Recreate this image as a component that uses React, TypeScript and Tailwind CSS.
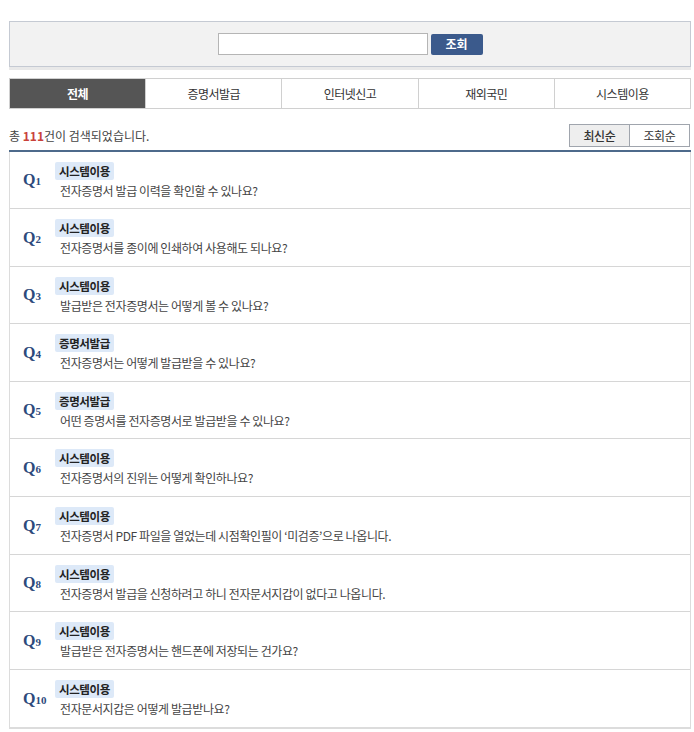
import React from 'react';

const TABS = ['전체', '증명서발급', '인터넷신고', '재외국민', '시스템이용'];

const FAQS = [
  { cat: '시스템이용', q: '전자증명서 발급 이력을 확인할 수 있나요?', h: 'h-[56px]' },
  { cat: '시스템이용', q: '전자증명서를 종이에 인쇄하여 사용해도 되나요?', h: 'h-[58px]' },
  { cat: '시스템이용', q: '발급받은 전자증명서는 어떻게 볼 수 있나요?', h: 'h-[57px]' },
  { cat: '증명서발급', q: '전자증명서는 어떻게 발급받을 수 있나요?', h: 'h-[58px]' },
  { cat: '증명서발급', q: '어떤 증명서를 전자증명서로 발급받을 수 있나요?', h: 'h-[57px]' },
  { cat: '시스템이용', q: '전자증명서의 진위는 어떻게 확인하나요?', h: 'h-[58px]' },
  { cat: '시스템이용', q: '전자증명서 PDF 파일을 열었는데 시점확인필이 ‘미검증’으로 나옵니다.', h: 'h-[58px]' },
  { cat: '시스템이용', q: '전자증명서 발급을 신청하려고 하니 전자문서지갑이 없다고 나옵니다.', h: 'h-[57px]' },
  { cat: '시스템이용', q: '발급받은 전자증명서는 핸드폰에 저장되는 건가요?', h: 'h-[58px]' },
  { cat: '시스템이용', q: '전자문서지갑은 어떻게 발급받나요?', h: 'h-[58px]' },
];

const font = { fontFamily: '"Noto Sans CJK KR", "Noto Sans", sans-serif' };

export default function App() {
  return (
    <div className="min-h-[732px] bg-white pt-[21px] pl-[9px] pr-[3px] text-[12px] text-[#333]" style={font}>
      {/* search */}
      <div className="border border-[#c5cad3] bg-[#f2f2f2] shadow-[0_3px_0_#e9e9e9]">
        <div className="flex h-[44px] items-center justify-center gap-[3px]">
          <input className="h-[22px] w-[210px] border border-[#b5b5b5] bg-white" />
          <button className="h-[21px] w-[52px] rounded-[2px] bg-[#3b5a8c] text-[12px] font-bold text-white">조회</button>
        </div>
      </div>

      {/* tabs */}
      <div className="mt-[11px] flex h-[31px] border border-[#d0d0d0] tracking-[-0.5px]">
        {TABS.map((t, i) => (
          <div
            key={t}
            className={
              i === 0
                ? 'flex flex-1 items-center justify-center bg-[#555] font-bold text-white'
                : 'flex flex-1 items-center justify-center border-l border-[#d0d0d0] text-[#333]'
            }
          >
            {t}
          </div>
        ))}
      </div>

      {/* count + sort */}
      <div className="mt-[15px] flex h-[23px] items-center justify-between">
        <div className="text-[#444]">
          총 <b className="text-[#c9413a]">111</b>건이 검색되었습니다.
        </div>
        <div className="mr-[1px] flex h-[23px] tracking-[-0.3px]">
          <div className="flex w-[61px] items-center justify-center border border-[#a0a5ad] bg-[#eeeeee] font-medium">최신순</div>
          <div className="flex w-[60px] items-center justify-center border border-l-0 border-[#a0a5ad] bg-white">조회순</div>
        </div>
      </div>

      {/* list */}
      <div className="mt-[3px] border-t-2 border-[#4d6a8b]">
        <div className="border-x border-b-2 border-[#dcdcdc]">
          {FAQS.map((f, i) => (
            <div key={i} className={`flex ${f.h} items-center ${i > 0 ? 'border-t border-[#d6d6d6]' : ''}`}>
              <div
                className="w-[45px] pl-[13px] font-bold text-[#2d4a7c]"
                style={{ fontFamily: '"Liberation Serif", serif' }}
              >
                <span className="text-[16px]">Q</span>
                <span className="text-[11px]">{i + 1}</span>
              </div>
              <div className="flex flex-col items-start">
                <span className="rounded-[2px] bg-[#dde9f8] px-[4px] text-[11.5px] leading-[18px] font-bold tracking-[-0.4px] text-[#222]">
                  {f.cat}
                </span>
                <span className="mt-[3px] pl-[5px] leading-[16px] tracking-[-0.4px] text-[#444]">{f.q}</span>
              </div>
            </div>
          ))}
        </div>
      </div>
    </div>
  );
}
